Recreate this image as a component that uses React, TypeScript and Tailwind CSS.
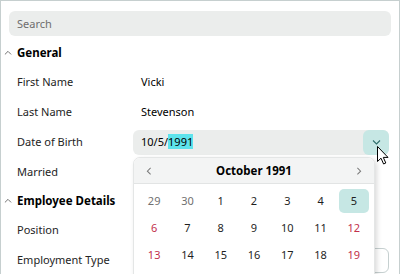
const weeks = [
  [29, 30, 1, 2, 3, 4, 5],
  [6, 7, 8, 9, 10, 11, 12],
  [13, 14, 15, 16, 17, 18, 19],
];

function Chevron({ dir, className }: { dir: "up" | "down" | "left" | "right"; className?: string }) {
  const d = {
    up: "M1 5 L4.5 1.5 L8 5",
    down: "M1 1.5 L4.5 5 L8 1.5",
    left: "M5 1 L1.5 4.5 L5 8",
    right: "M1.5 1 L5 4.5 L1.5 8",
  }[dir];
  const box = dir === "up" || dir === "down" ? "0 0 9 6.5" : "0 0 6.5 9";
  return (
    <svg viewBox={box} className={className} fill="none" stroke="currentColor" strokeWidth="1.1">
      <path d={d} />
    </svg>
  );
}

function Row({ label, children }: { label: string; children?: React.ReactNode }) {
  return (
    <div className="flex h-[30px] items-center">
      <div className="w-[132px] shrink-0 pl-[16px] pt-[1px] text-[#242424]">{label}</div>
      <div className="flex flex-1 items-center pr-[10px]">{children}</div>
    </div>
  );
}

function Header({ title }: { title: string }) {
  return (
    <div className="flex h-[26px] items-center pt-[1px]">
      <Chevron dir="up" className="ml-[3px] mr-[5px] w-[8px] text-[#707070]" />
      <span className="text-[11.5px] font-bold text-black">{title}</span>
    </div>
  );
}

export default function App() {
  return (
    <div
      className="relative h-[274px] w-[400px] overflow-hidden border border-b-0 border-[#c6cfcf] bg-white text-[11px]"
      style={{ fontFamily: '"Noto Sans", sans-serif' }}
    >
      <div className="mx-[8px] mt-[10px] flex h-[25px] items-center rounded-[6px] bg-[#ebedec] px-[8px] pt-[1px] text-[#6e6e6e]">
        Search
      </div>

      <div className="mt-[3px]">
        <Header title="General" />
        <div className="pt-[2px]">
          <Row label="First Name">
            <span className="pl-[8px] pt-[1px]">Vicki</span>
          </Row>
          <Row label="Last Name">
            <span className="pl-[8px] pt-[1px]">Stevenson</span>
          </Row>
          <Row label="Date of Birth">
            <div className="flex h-[25px] flex-1 items-center justify-between rounded-[6px] bg-[#ebedec] pl-[8px]">
              <span className="pt-[1px]">
                10/5/<span className="bg-[#5ee3ec]">1991</span>
              </span>
              <div className="flex h-[25px] w-[26px] items-center justify-center rounded-[6px] bg-[#c6e7e4] text-[#2f6f6c]">
                <Chevron dir="down" className="w-[9px]" />
              </div>
            </div>
          </Row>
          <Row label="Married" />
        </div>
        <Header title="Employee Details" />
        <div className="pt-[2px]">
          <Row label="Position" />
          <Row label="Employment Type">
            <div className="h-[25px] flex-1 rounded-[6px] border border-[#c6d0d0] bg-white" />
          </Row>
        </div>
      </div>

      {/* calendar popup */}
      <div className="absolute left-[132px] top-[156px] h-[130px] w-[242px] overflow-hidden rounded-[7px] border border-[#e4e6e6] bg-white shadow-[2px_2px_5px_rgba(0,0,0,0.15)]">
        <div className="flex h-[26px] items-center justify-between border-b border-[#e2e4e4] bg-[#f3f4f4] px-[12px] pt-[1px]">
          <Chevron dir="left" className="w-[6px] text-[#7a7a7a]" />
          <span className="text-[11.5px] font-bold text-black">October 1991</span>
          <Chevron dir="right" className="w-[6px] text-[#7a7a7a]" />
        </div>
        <div className="grid grid-cols-7 gap-x-[3px] gap-y-[3px] px-[5px] pt-[5px]">
          {weeks.flat().map((d, i) => {
            const other = i < 2;
            const weekend = i % 7 === 0 || i % 7 === 6;
            const selected = d === 5;
            return (
              <div
                key={i}
                className={
                  "flex h-[24px] items-center justify-center rounded-[5px] pt-[1px] " +
                  (selected
                    ? "bg-[#c6e7e4] text-[#1f1f1f]"
                    : other
                    ? "text-[#707070]"
                    : weekend
                    ? "text-[#c2304c]"
                    : "text-[#1f1f1f]")
                }
              >
                {d}
              </div>
            );
          })}
        </div>
      </div>

      {/* mouse pointer */}
      <svg viewBox="0 0 12 19" className="absolute left-[376px] top-[145px] w-[12px]">
        <path
          d="M0.5 0.5 L0.5 15.5 L4 12.2 L6.6 18 L8.8 17 L6.3 11.4 L11 11.4 Z"
          fill="white"
          stroke="black"
          strokeWidth="1"
          strokeLinejoin="round"
        />
      </svg>
    </div>
  );
}
